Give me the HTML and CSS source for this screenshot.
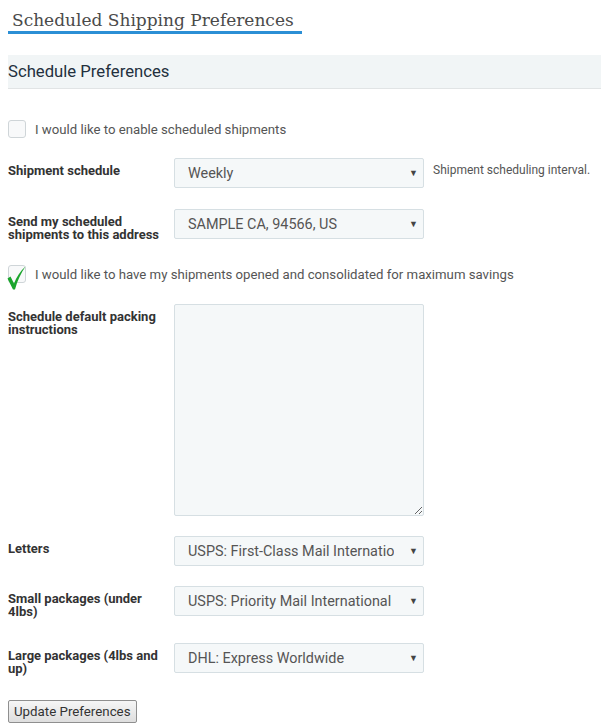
FILE: index.html
```html
<!DOCTYPE html>
<html>
<head>
<meta charset="utf-8">
<link rel="stylesheet" href="styles.css">
</head>
<body>
<h1 class="page-title">Scheduled Shipping Preferences</h1>
<div class="section-bar">Schedule Preferences</div>
<form class="prefs">
  <label class="check-row first-check">
    <span class="box"></span>
    <span class="check-label">I would like to enable scheduled shipments</span>
  </label>

  <div class="row r-schedule">
    <div class="row-label">Shipment schedule</div>
    <div class="select-wrap">
      <select class="sel"><option>Weekly</option></select>
      <span class="arrow">&#9660;</span>
    </div>
    <div class="desc">Shipment scheduling interval.</div>
  </div>

  <div class="row r-address">
    <div class="row-label">Send my scheduled shipments to this address</div>
    <div class="select-wrap">
      <select class="sel"><option>SAMPLE CA, 94566, US</option></select>
      <span class="arrow">&#9660;</span>
    </div>
  </div>

  <label class="check-row second-check">
    <span class="box">
      <svg class="tick" width="20" height="26" viewBox="0 0 20 26"><path d="M0.5 12.5 L3.5 10.5 L7 17.5 C9.5 11 13 5.5 18.5 0.5 C14 7 10.5 14 8 23.5 L6 23.5 Z" fill="#1aa52c"/></svg>
    </span>
    <span class="check-label">I would like to have my shipments opened and consolidated for maximum savings</span>
  </label>

  <div class="row r-notes">
    <div class="row-label">Schedule default packing instructions</div>
    <textarea class="notes"></textarea>
  </div>

  <div class="row r-letters">
    <div class="row-label">Letters</div>
    <div class="select-wrap">
      <select class="sel"><option>USPS: First-Class Mail International</option></select>
      <span class="arrow">&#9660;</span>
    </div>
  </div>

  <div class="row r-small">
    <div class="row-label">Small packages (under 4lbs)</div>
    <div class="select-wrap">
      <select class="sel"><option>USPS: Priority Mail International</option></select>
      <span class="arrow">&#9660;</span>
    </div>
  </div>

  <div class="row r-large">
    <div class="row-label">Large packages (4lbs and up)</div>
    <div class="select-wrap">
      <select class="sel"><option>DHL: Express Worldwide</option></select>
      <span class="arrow">&#9660;</span>
    </div>
  </div>

  <button type="button" class="btn">Update Preferences</button>
</form>
</body>
</html>
```
FILE: styles.css
```css
html, body {
  margin: 0;
  padding: 0;
  background: #fff;
}
body {
  padding: 0 0 0 8px;
  font-family: Roboto, "Liberation Sans", sans-serif;
  color: #555;
  width: 593px;
}
.page-title {
  display: inline-block;
  margin: 9px 0 0 0;
  padding: 0 8px 0 4px;
  font-family: "DejaVu Serif", serif;
  font-weight: normal;
  font-size: 17px;
  line-height: 22px;
  color: #4a4a4a;
  border-bottom: 3px solid #2b8fd5;
}
.section-bar {
  margin-top: 21px;
  height: 33px;
  line-height: 33px;
  background: #f1f5f6;
  border-bottom: 1px solid #e1e4e5;
  font-size: 16.7px;
  color: #23303d;
}
.prefs {
  display: flex;
  flex-direction: column;
  align-items: flex-start;
}
.check-row {
  display: flex;
  align-items: center;
  gap: 9px;
  font-size: 13.2px;
  color: #555;
}
.first-check { margin-top: 31px; }
.second-check { margin-top: 24px; }
.box {
  position: relative;
  width: 16px;
  height: 16px;
  border: 1px solid #cfd5d8;
  border-radius: 3px;
  background: #f8f9fa;
  flex: none;
}
.tick {
  position: absolute;
  left: -2px;
  top: 0px;
}
.row {
  display: flex;
  align-items: flex-start;
}
.row-label {
  width: 166px;
  flex: none;
  padding-top: 6px;
  padding-right: 12px;
  box-sizing: border-box;
  font-size: 13px;
  line-height: 13px;
  font-weight: bold;
  color: #333;
}
.r-schedule { margin-top: 20px; }
.r-address { margin-top: 21px; }
.r-notes { margin-top: 21px; }
.r-letters { margin-top: 20px; }
.r-small { margin-top: 20px; }
.r-large { margin-top: 25px; }
.select-wrap {
  position: relative;
  width: 250px;
  height: 30px;
  flex: none;
}
.sel {
  appearance: none;
  -webkit-appearance: none;
  width: 250px;
  height: 30px;
  box-sizing: border-box;
  margin: 0;
  padding: 1px 29px 0 13px;
  border: 1px solid #d6dfe3;
  border-radius: 2px;
  background: #f5f8f9;
  font-family: Roboto, "Liberation Sans", sans-serif;
  font-size: 14.4px;
  color: #555;
}
.arrow {
  position: absolute;
  right: 6px;
  top: 10px;
  font-size: 9px;
  color: #444;
  pointer-events: none;
}
.desc {
  margin-left: 9px;
  padding-top: 5px;
  font-size: 12px;
  color: #555;
}
.notes {
  width: 250px;
  height: 212px;
  box-sizing: border-box;
  margin: 0;
  border: 1px solid #d6dfe3;
  border-radius: 2px;
  background: #f5f8f9;
}
.btn {
  margin-top: 25px;
  height: 23px;
  padding: 0 5px;
  font-family: Roboto, "Liberation Sans", sans-serif;
  font-size: 13.3px;
  color: #333;
  border: 1px solid #8f8f8f;
  border-radius: 2px;
  background: linear-gradient(#f6f6f6, #dedede);
}
```
